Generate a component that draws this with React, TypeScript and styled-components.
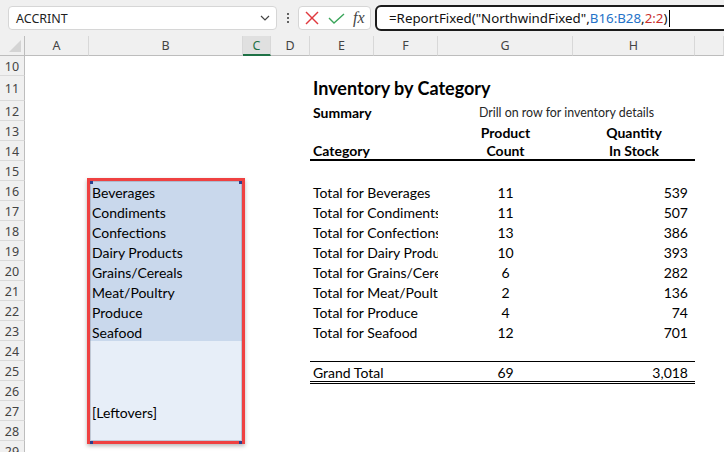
import React from "react";
import styled, { createGlobalStyle } from "styled-components";

const GlobalStyle = createGlobalStyle`
  html, body {
    margin: 0;
    padding: 0;
    background: #ffffff;
    overflow: hidden;
  }
  body {
    font-family: "Noto Sans", "Open Sans", sans-serif;
  }
`;

const COLUMNS = ["A", "B", "C", "D", "E", "F", "G", "H", ""];
const ROWS = Array.from({ length: 20 }, (_, i) => i + 10);

const categories = [
  "Beverages",
  "Condiments",
  "Confections",
  "Dairy Products",
  "Grains/Cereals",
  "Meat/Poultry",
  "Produce",
  "Seafood",
];

const totals = [
  ["Total for Beverages", "11", "539"],
  ["Total for Condiments", "11", "507"],
  ["Total for Confections", "13", "386"],
  ["Total for Dairy Products", "10", "393"],
  ["Total for Grains/Cereals", "6", "282"],
  ["Total for Meat/Poultry", "2", "136"],
  ["Total for Produce", "4", "74"],
  ["Total for Seafood", "12", "701"],
];

// sheet row number -> grid row (row 1 of the grid is the column header)
const gr = (r: number) => r - 8;
// column letter -> grid column (column 1 is the row header)
const gc = (c: string) => c.charCodeAt(0) - 63;

function App() {
  return (
    <>
      <GlobalStyle />
      <Window>
        <TopBar>
          <NameBox>
            <span>ACCRINT</span>
            <svg width="10" height="6" viewBox="0 0 10 6">
              <polyline points="1,1 5,5 9,1" fill="none" stroke="#444" strokeWidth="1.2" />
            </svg>
          </NameBox>
          <Kebab>
            <Dot />
            <Dot />
            <Dot />
          </Kebab>
          <FxBox>
            <svg width="14" height="14" viewBox="0 0 14 14">
              <line x1="1" y1="1" x2="13" y2="13" stroke="#e0393e" strokeWidth="1.4" />
              <line x1="13" y1="1" x2="1" y2="13" stroke="#e0393e" strokeWidth="1.4" />
            </svg>
            <svg width="17" height="11" viewBox="0 0 17 11">
              <polyline points="1,5 6,10 16,1" fill="none" stroke="#3aa55a" strokeWidth="1.4" />
            </svg>
            <FxLabel>fx</FxLabel>
          </FxBox>
          <FormulaInput>
            <span>=ReportFixed("NorthwindFixed",</span>
            <RefText $tone="blue">B16:B28</RefText>
            <span>,</span>
            <RefText $tone="red">2:2</RefText>
            <span>)</span>
            <Caret />
          </FormulaInput>
        </TopBar>

        <Sheet>
          <Corner />
          {COLUMNS.map((c, i) => (
            <ColHead key={i} $selected={c === "C"}>
              {c}
            </ColHead>
          ))}
          {ROWS.map((r) => (
            <RowHead key={r} $row={gr(r)}>
              {r}
            </RowHead>
          ))}

          <Cell $row={gr(11)} $col={gc("E")} $span={4} $size={18} $bold>
            Inventory by Category
          </Cell>
          <Cell $row={gr(12)} $col={gc("E")} $span={2} $bold>
            Summary
          </Cell>
          <Cell $row={gr(12)} $col={gc("G")} $span={2} $align="center" $size={12.4} $tone="#262626">
            Drill on row for inventory details
          </Cell>
          <Cell $row={gr(13)} $col={gc("G")} $align="center" $bold>
            Product
          </Cell>
          <Cell $row={gr(13)} $col={gc("H")} $align="center" $bold>
            Quantity
          </Cell>
          <Cell $row={gr(14)} $col={gc("E")} $span={2} $bold $rule="thick">
            Category
          </Cell>
          <Cell $row={gr(14)} $col={gc("G")} $align="center" $bold $rule="thick">
            Count
          </Cell>
          <Cell $row={gr(14)} $col={gc("H")} $align="center" $bold $rule="thick">
            In Stock
          </Cell>

          {ROWS.filter((r) => r >= 16 && r <= 28).map((r) => (
            <Cell key={r} $row={gr(r)} $col={gc("B")} $fill={r <= 23 ? "#c9d8ec" : "#e7eef8"}>
              {r <= 23 ? categories[r - 16] : r === 27 ? "[Leftovers]" : ""}
            </Cell>
          ))}

          {totals.map(([label, count, qty], i) => (
            <React.Fragment key={label}>
              <Cell $row={gr(16 + i)} $col={gc("E")} $span={2}>
                {label}
              </Cell>
              <Cell $row={gr(16 + i)} $col={gc("G")} $align="center">
                {count}
              </Cell>
              <Cell $row={gr(16 + i)} $col={gc("H")} $align="right">
                {qty}
              </Cell>
            </React.Fragment>
          ))}

          <Cell $row={gr(25)} $col={gc("E")} $span={2} $rule="total">
            Grand Total
          </Cell>
          <Cell $row={gr(25)} $col={gc("G")} $align="center" $rule="total">
            69
          </Cell>
          <Cell $row={gr(25)} $col={gc("H")} $align="right" $rule="total">
            3,018
          </Cell>

          <RangeHighlight>
            <Handle $v="top" $h="left" />
            <Handle $v="top" $h="right" />
            <Handle $v="bottom" $h="left" />
            <Handle $v="bottom" $h="right" />
          </RangeHighlight>
        </Sheet>
      </Window>
    </>
  );
}

export default App;

const Window = styled.div`
  width: 724px;
  height: 452px;
  overflow: hidden;
  background: #ffffff;
`;

const TopBar = styled.div`
  display: flex;
  align-items: center;
  height: 36px;
  padding-left: 8px;
  background: #f0f0f0;
  box-sizing: border-box;
`;

const NameBox = styled.div`
  display: flex;
  align-items: center;
  justify-content: space-between;
  box-sizing: border-box;
  width: 269px;
  height: 24px;
  padding: 0 6px 0 7px;
  background: #ffffff;
  border: 1px solid #d6d6d6;
  border-radius: 4px;
  font-size: 12.5px;
  color: #1f1f1f;
`;

const Kebab = styled.div`
  display: flex;
  flex-direction: column;
  align-items: center;
  justify-content: center;
  gap: 2px;
  width: 21px;
`;

const Dot = styled.span`
  width: 2px;
  height: 2px;
  border-radius: 1px;
  background: #333;
`;

const FxBox = styled.div`
  display: flex;
  align-items: center;
  gap: 9px;
  box-sizing: border-box;
  width: 73px;
  height: 24px;
  padding-left: 6px;
  background: #ffffff;
  border: 1px solid #d6d6d6;
  border-radius: 4px;
`;

const FxLabel = styled.span`
  font-family: "Liberation Serif", "DejaVu Serif", serif;
  font-style: italic;
  font-size: 16px;
  color: #444;
  margin-left: -1px;
`;

const FormulaInput = styled.div`
  display: flex;
  align-items: center;
  box-sizing: border-box;
  flex: 1;
  height: 26px;
  margin-left: 4px;
  margin-right: -12px;
  padding-left: 12px;
  background: #ffffff;
  border: 2px solid #1b1b1b;
  border-radius: 6px;
  font-size: 13.3px;
  color: #111;
  white-space: pre;
`;

const RefText = styled.span<{ $tone: "blue" | "red" }>`
  color: ${(p) => (p.$tone === "blue" ? "#2472c8" : "#c9302c")};
`;

const Caret = styled.span`
  width: 1px;
  height: 17px;
  margin-left: 2px;
  background: #000;
`;

const Sheet = styled.div`
  display: grid;
  grid-template-columns: 25px 64px 154px 28px 39px 64px 64px 135px 122px 1fr;
  grid-template-rows: 20px 20px 25px repeat(18, 20px);
  font-family: Lato, "Liberation Sans", sans-serif;
  color: #000;
`;

const Corner = styled.div`
  grid-row: 1;
  grid-column: 1;
  position: relative;
  background: #f0f0f0;
  border-right: 1px solid #bdbdbd;
  border-bottom: 1px solid #bdbdbd;
  &::after {
    content: "";
    position: absolute;
    right: 3px;
    bottom: 3px;
    width: 12px;
    height: 12px;
    background: #d4d4d4;
    clip-path: polygon(100% 0, 100% 100%, 0 100%);
  }
`;

const ColHead = styled.div<{ $selected?: boolean }>`
  grid-row: 1;
  display: flex;
  align-items: center;
  justify-content: center;
  box-sizing: border-box;
  background: ${(p) => (p.$selected ? "#e0e0e0" : "#f0f0f0")};
  border-right: 1px solid #d8d8d8;
  border-bottom: ${(p) => (p.$selected ? "2px solid #1e7145" : "1px solid #bdbdbd")};
  font-family: "Noto Sans", "Open Sans", sans-serif;
  font-size: 12.5px;
  color: ${(p) => (p.$selected ? "#1e7145" : "#444")};
`;

const RowHead = styled.div<{ $row: number }>`
  grid-row: ${(p) => p.$row};
  grid-column: 1;
  display: flex;
  align-items: center;
  justify-content: center;
  box-sizing: border-box;
  background: #f0f0f0;
  border-right: 1px solid #bdbdbd;
  border-bottom: 1px solid #dadada;
  font-family: "Noto Sans", "Open Sans", sans-serif;
  font-size: 12.5px;
  color: #444;
  padding-top: 1px;
`;

type Rule = "thick" | "total";

const Cell = styled.div<{
  $row: number;
  $col: number;
  $span?: number;
  $align?: "left" | "center" | "right";
  $bold?: boolean;
  $size?: number;
  $tone?: string;
  $fill?: string;
  $rule?: Rule;
}>`
  grid-row: ${(p) => p.$row};
  grid-column: ${(p) => p.$col} / span ${(p) => p.$span ?? 1};
  display: flex;
  align-items: flex-end;
  justify-content: ${(p) =>
    p.$align === "center" ? "center" : p.$align === "right" ? "flex-end" : "flex-start"};
  box-sizing: border-box;
  min-width: 0;
  overflow: hidden;
  white-space: nowrap;
  padding: 0 ${(p) => (p.$align === "right" ? "7px" : "3px")} ${(p) => ((p.$size ?? 14) > 16 ? 3 : 0)}px 3px;
  line-height: ${(p) => ((p.$size ?? 14) > 16 ? 20 : 17)}px;
  font-size: ${(p) => p.$size ?? 14}px;
  font-weight: ${(p) => (p.$bold ? 700 : 400)};
  color: ${(p) => p.$tone ?? "#000"};
  background: ${(p) => p.$fill ?? "transparent"};
  ${(p) => p.$rule === "thick" && "border-bottom: 2px solid #000; line-height: 16px;"}
  ${(p) =>
    p.$rule === "total" &&
    "border-top: 1px solid #000; border-bottom: 3px double #000; margin-bottom: -3px;"}
`;

const RangeHighlight = styled.div`
  grid-column: 3;
  grid-row: 8 / 21;
  position: relative;
  z-index: 2;
  margin: -3px -2px -3px -2px;
  border: 3px solid #ef4141;
  box-shadow: 0 2px 4px rgba(0, 0, 0, 0.28), inset 0 0 0 1px rgba(120, 130, 150, 0.35);
  pointer-events: none;
`;

const Handle = styled.span<{ $v: "top" | "bottom"; $h: "left" | "right" }>`
  position: absolute;
  width: 3px;
  height: 3px;
  background: #2b3f8c;
  ${(p) => (p.$v === "top" ? "top: 0;" : "bottom: -3px;")}
  ${(p) => (p.$h === "left" ? "left: 0;" : "right: 0;")}
`;
